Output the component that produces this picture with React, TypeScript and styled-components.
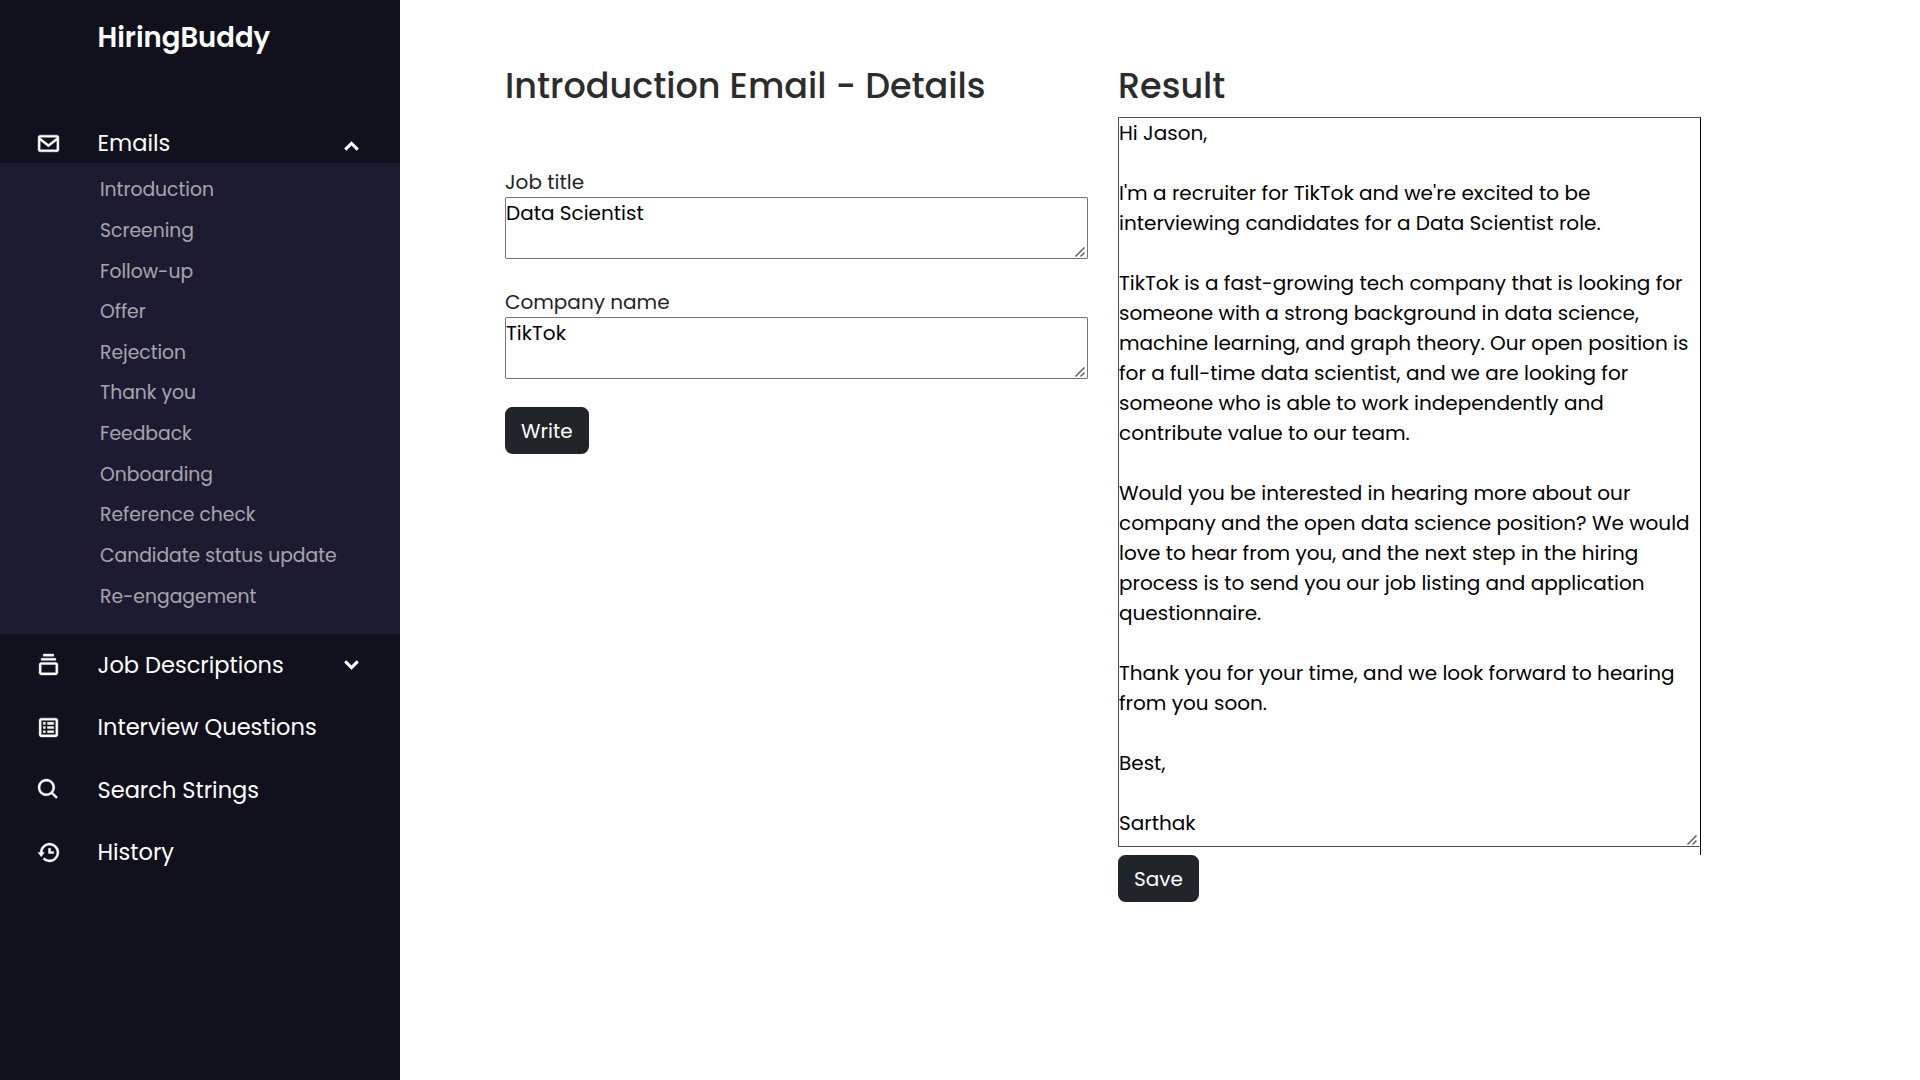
import React from "react";
import styled, { createGlobalStyle } from "styled-components";
import {
  BiCollection,
  BiEnvelope,
  BiHistory,
  BiSearch,
  BiSolidChevronDown,
  BiSolidChevronUp,
  BiSpreadsheet,
} from "react-icons/bi";

const GlobalStyle = createGlobalStyle`
  *, *::before, *::after { box-sizing: border-box; }
  body {
    margin: 0;
    background: #fff;
    color: #212529;
    font-family: Poppins, Inter, "Open Sans", sans-serif;
    font-size: 20px;
    line-height: 1.5;
  }
  h2, ul { margin: 0; padding: 0; }
`;

const Page = styled.div`
  display: flex;
  height: 100vh;
  overflow: hidden;
`;

const Sidebar = styled.nav`
  flex: 0 0 400px;
  display: flex;
  flex-direction: column;
  background: #11101d;
  color: #fff;
`;

const Brand = styled.div`
  height: 75px;
  padding-left: 97.5px;
  margin-bottom: 48px;
  font-size: 27.5px;
  font-weight: 600;
  line-height: 75px;
`;

const MenuRow = styled.div<{ $height: number }>`
  display: flex;
  align-items: center;
  height: ${(p) => p.$height}px;
  padding-right: 36px;
  font-size: 22.5px;
  cursor: pointer;
`;

const MenuText = styled.span`
  padding-top: 0.9px;
  white-space: nowrap;
`;

const IconCell = styled.span<{ $drop?: number }>`
  display: flex;
  justify-content: center;
  width: 97.5px;
  transform: translateY(${(p) => p.$drop ?? 0}px);

  svg {
    width: 25px;
    height: 25px;
    stroke: currentColor;
    stroke-width: 0.4px;
  }
`;

const Chevron = styled.span<{ $drop?: number }>`
  display: flex;
  margin-left: auto;
  transform: translateY(${(p) => p.$drop ?? 0}px);

  svg { width: 25px; height: 25px; }
`;

const SubMenu = styled.ul`
  height: 471px;
  padding: 7.3px 0 0 100px;
  background: #1d1b31;
  list-style: none;
`;

const SubItem = styled.li`
  height: 40.625px;
  font-size: 18.75px;
  line-height: 40.625px;
  white-space: nowrap;
  opacity: 0.6;
`;

const Main = styled.main`
  display: grid;
  grid-template-columns: 583px 583px;
  column-gap: 30px;
  align-content: start;
  padding: 65px 0 0 105px;
`;

const Column = styled.section`
  display: flex;
  flex-direction: column;
  align-items: flex-start;
`;

const Heading = styled.h2`
  height: 42px;
  color: #2c2c2c;
  font-size: 35px;
  font-weight: 500;
  line-height: 42px;
  white-space: nowrap;
`;

const Form = styled.div`
  display: flex;
  flex-direction: column;
  align-items: flex-start;
  gap: 28px;
  margin-top: 60px;
`;

const Field = styled.label`
  display: flex;
  flex-direction: column;
`;

const AreaWrap = styled.div`
  position: relative;
`;

const Area = styled.textarea`
  display: block;
  width: 583px;
  height: 62px;
  margin: 0;
  padding: 0;
  border: 1px solid #767676;
  border-radius: 1px;
  outline: none;
  background: #fff;
  color: #000;
  font: inherit;
  resize: none;
`;

const ResultArea = styled(Area)`
  width: 582px;
  height: 730px;
  border-color: #505050;
  border-right: 0;
`;

const GripSvg = styled.svg`
  position: absolute;
  right: 3px;
  bottom: 2px;
  width: 10px;
  height: 10px;
  stroke: #555;
  stroke-width: 1.4;
  pointer-events: none;
`;

const ResultFrame = styled.div`
  width: 583px;
  height: 738px;
  margin-top: 10px;
  border-right: 1px solid #000;
`;

const Button = styled.button`
  height: 47px;
  padding: 0 16px;
  border: 0;
  border-radius: 7.5px;
  background: #212529;
  color: #fff;
  font: inherit;
  cursor: pointer;
`;

const emailItems = [
  "Introduction",
  "Screening",
  "Follow-up",
  "Offer",
  "Rejection",
  "Thank you",
  "Feedback",
  "Onboarding",
  "Reference check",
  "Candidate status update",
  "Re-engagement",
];

const resultText = `Hi Jason,

I'm a recruiter for TikTok and we're excited to be interviewing candidates for a Data Scientist role.

TikTok is a fast-growing tech company that is looking for someone with a strong background in data science, machine learning, and graph theory. Our open position is for a full-time data scientist, and we are looking for someone who is able to work independently and contribute value to our team.

Would you be interested in hearing more about our company and the open data science position? We would love to hear from you, and the next step in the hiring process is to send you our job listing and application questionnaire.

Thank you for your time, and we look forward to hearing from you soon.

Best,

Sarthak`;

function Grip() {
  return (
    <GripSvg viewBox="0 0 10 10" aria-hidden="true">
      <path d="M0.5 9.5 9.5 0.5M5.5 9.5 9.5 5.5" />
    </GripSvg>
  );
}

function TextField({ label, value }: { label: string; value: string }) {
  return (
    <Field>
      <span>{label}</span>
      <AreaWrap>
        <Area defaultValue={value} spellCheck={false} />
        <Grip />
      </AreaWrap>
    </Field>
  );
}

export default function App() {
  return (
    <>
      <GlobalStyle />
      <Page>
        <Sidebar>
          <Brand>HiringBuddy</Brand>
          <MenuRow $height={40}>
            <IconCell><BiEnvelope /></IconCell>
            <MenuText>Emails</MenuText>
            <Chevron $drop={3}><BiSolidChevronUp /></Chevron>
          </MenuRow>
          <SubMenu>
            {emailItems.map((text) => (
              <SubItem key={text}>{text}</SubItem>
            ))}
          </SubMenu>
          <MenuRow $height={62.5}>
            <IconCell $drop={-1}><BiCollection /></IconCell>
            <MenuText>Job Descriptions</MenuText>
            <Chevron $drop={-1}><BiSolidChevronDown /></Chevron>
          </MenuRow>
          <MenuRow $height={62.5}>
            <IconCell><BiSpreadsheet /></IconCell>
            <MenuText>Interview Questions</MenuText>
          </MenuRow>
          <MenuRow $height={62.5}>
            <IconCell $drop={-1}><BiSearch /></IconCell>
            <MenuText>Search Strings</MenuText>
          </MenuRow>
          <MenuRow $height={62.5}>
            <IconCell><BiHistory /></IconCell>
            <MenuText>History</MenuText>
          </MenuRow>
        </Sidebar>
        <Main>
          <Column>
            <Heading>Introduction Email - Details</Heading>
            <Form>
              <TextField label="Job title" value="Data Scientist" />
              <TextField label="Company name" value="TikTok" />
              <Button>Write</Button>
            </Form>
          </Column>
          <Column>
            <Heading>Result</Heading>
            <ResultFrame>
              <AreaWrap>
                <ResultArea defaultValue={resultText} spellCheck={false} />
                <Grip />
              </AreaWrap>
            </ResultFrame>
            <Button>Save</Button>
          </Column>
        </Main>
      </Page>
    </>
  );
}
